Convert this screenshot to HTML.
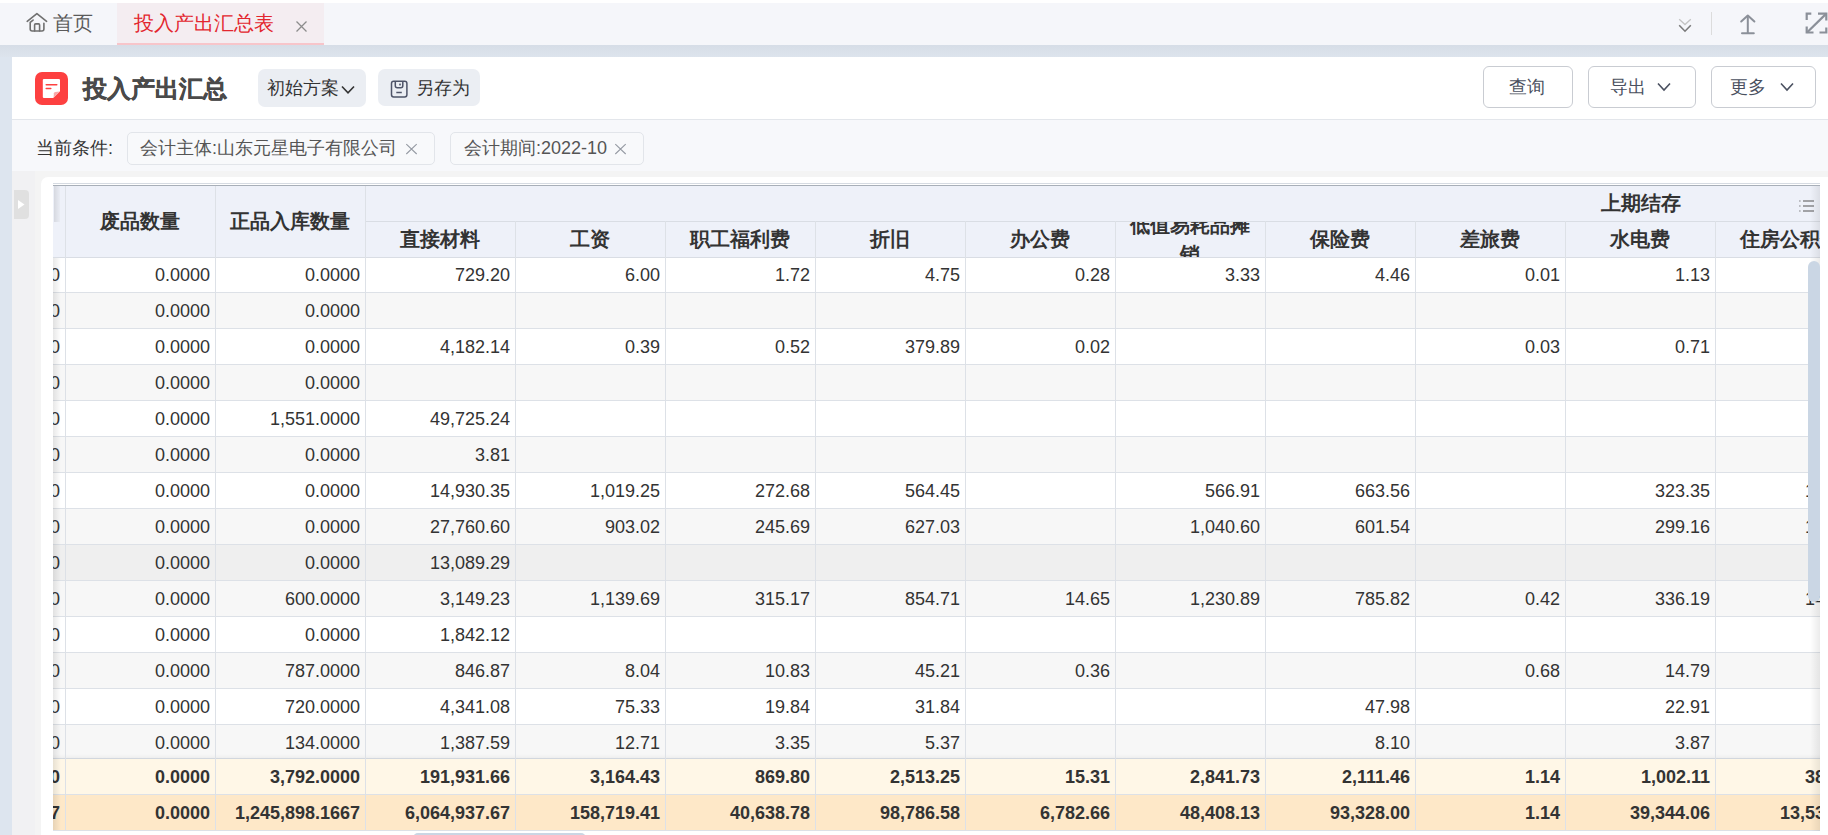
<!DOCTYPE html>
<html><head><meta charset="utf-8"><style>
*{box-sizing:border-box}
html,body{margin:0;padding:0}
body{width:1828px;height:835px;overflow:hidden;position:relative;background:#dde5ef;font-family:"Liberation Sans",sans-serif;color:#333}
.a{position:absolute}
.tabbar{left:0;top:0;width:1828px;height:45px;background:#f5f6fa;border-top:3px solid #fff}
.band{left:0;top:45px;width:1828px;height:12px;background:linear-gradient(180deg,#d6dde7,#dde4ed)}
.hdr{left:12px;top:57px;width:1816px;height:63px;background:#fff;border-bottom:1px solid #e3e6eb}
.cond{left:12px;top:120px;width:1816px;height:51px;background:#f7f8fb}
.gray{left:12px;top:171px;width:1816px;height:664px;background:#f4f4f4}
.gray2{left:12px;top:171px;width:23px;height:664px;background:#f1f1f3}
.card{left:41px;top:177px;width:1787px;height:658px;background:#fff;border-radius:7px 0 0 0}
.t{white-space:nowrap;line-height:1}
.btn{border:1px solid #c9ccd2;border-radius:6px;background:#fff}
.tag{border:1px solid #e2e5ea;border-radius:5px;background:#f8f9fb}
.tbl{left:53px;top:183px;width:1767px;height:648px;overflow:hidden}
.th{background:#eef1f9}
.c{position:absolute;white-space:nowrap;line-height:36px;height:36px;font-size:18px;text-align:right;padding-right:5px;overflow:hidden}
.hc{position:absolute;font-weight:bold;font-size:20px;text-align:center;overflow:hidden;color:#333}
</style></head><body>

<div class="a tabbar"></div>
<div class="a" style="left:117px;top:3px;width:207px;height:42px;background:#f4edf1;border-bottom:2px solid #f7c5ca"></div>
<svg class="a" style="left:22px;top:8px" width="30" height="30" viewBox="0 0 30 30"><g fill="none" stroke="#707070" stroke-width="1.6" stroke-linecap="round" stroke-linejoin="round"><path d="M5.2 13.3 L14.9 5.6 L24.6 13.3"/><path d="M11.1 12.1 L8.2 14.4 L8.2 21 Q8.2 23 10.2 23 L19.9 23 Q21.9 23 21.9 21 L21.9 15.3"/><path d="M12.6 23 L12.6 17 Q12.6 15.9 13.7 15.9 L16.6 15.9 Q17.6 15.9 17.6 17 L17.6 23"/></g></svg>
<div class="a t" style="left:53px;top:13px;font-size:20px;color:#5a5a5a">首页</div>
<div class="a t" style="left:134px;top:13px;font-size:20px;color:#e3262e">投入产出汇总表</div>
<svg class="a" style="left:295px;top:20px" width="13" height="13" viewBox="0 0 13 13"><path d="M1.5 1.5 L11.5 11.5 M11.5 1.5 L1.5 11.5" stroke="#8c8c8c" stroke-width="1.3"/></svg>
<svg class="a" style="left:1676px;top:16px" width="18" height="18" viewBox="0 0 18 18"><path d="M3.2 3.2 L9 8.6 L14.8 3.2" fill="none" stroke="#c4c4c4" stroke-width="1.3"/><path d="M3.2 9.3 L9 15.2 L14.8 9.3" fill="none" stroke="#7a7a7a" stroke-width="1.6"/></svg>
<div class="a" style="left:1711px;top:12px;width:1px;height:23px;background:#dcdcdc"></div>
<svg class="a" style="left:1736px;top:12px" width="24" height="24" viewBox="0 0 24 24"><g fill="none" stroke="#8b9099" stroke-width="2" stroke-linecap="round" stroke-linejoin="round"><path d="M11.8 21 L11.8 4"/><path d="M5.2 9.5 L11.8 3.5 L18.4 9.5"/><path d="M6 21.3 L17.8 21.3"/></g></svg>
<svg class="a" style="left:1802px;top:10px" width="26" height="26" viewBox="0 0 26 26"><g fill="none" stroke="#8b9099" stroke-width="2.2" stroke-linecap="butt"><path d="M4.7 10 L4.7 3.6 L9.3 3.6"/><path d="M16 3.6 L24.3 3.6 L24.3 10.5"/><path d="M24.3 3.6 L5 22.5"/><path d="M4.7 16.5 L4.7 22.5 L11.5 22.5"/><path d="M17.5 22.5 L24.3 22.5 L24.3 17.5"/></g></svg>
<div class="a band"></div>
<div class="a hdr"></div>
<div class="a" style="left:35px;top:72px;width:33px;height:33px;border-radius:7px;background:#fd4040"></div>
<svg class="a" style="left:35px;top:72px" width="33" height="33" viewBox="0 0 33 33"><path d="M9 6.9 Q7.8 6.9 7.8 8.1 L7.8 24.9 Q7.8 26 9 26 L18.2 26 L25 19.3 L25 8.1 Q25 6.9 23.8 6.9 Z" fill="#fff"/><path d="M18.6 25.8 L18.9 21.2 Q19 20 20.2 19.9 L24.8 19.6 Z" fill="#f9a9a9"/><path d="M11.2 12.8 L21.8 12.8 M11.2 16.4 L15.8 16.4" stroke="#fd4040" stroke-width="1.5" stroke-linecap="round"/></svg>
<div class="a t" style="left:83px;top:77px;font-size:24px;font-weight:bold;color:#4a4a4a;-webkit-text-stroke:0.4px #4a4a4a">投入产出汇总</div>
<div class="a" style="left:258px;top:69px;width:108px;height:38px;border-radius:7px;background:#ebeef3"></div>
<div class="a t" style="left:267px;top:79px;font-size:18px;color:#333">初始方案</div>
<svg class="a" style="left:340px;top:84px" width="16" height="12" viewBox="0 0 16 12"><path d="M2 2.5 L8 8.8 L14 2.5" fill="none" stroke="#333" stroke-width="1.6"/></svg>
<div class="a" style="left:378px;top:69px;width:102px;height:37px;border-radius:7px;background:#ebeef3"></div>
<svg class="a" style="left:384px;top:74px" width="30" height="30" viewBox="0 0 30 30"><g fill="none" stroke="#4e5468" stroke-width="1.5"><rect x="7.5" y="7.3" width="15.4" height="15.6" rx="2.2"/><path d="M11.3 7.3 L11.3 11.8 Q11.3 13.8 13.3 13.8 L16.8 13.8 Q18.8 13.8 18.8 11.8 L18.8 7.3"/><path d="M12.3 18.5 L17.8 18.5"/></g><rect x="15.2" y="9.6" width="1.6" height="1.8" fill="#4e5468"/></svg>
<div class="a t" style="left:416px;top:79px;font-size:18px;color:#333">另存为</div>
<div class="a btn" style="left:1483px;top:66px;width:90px;height:42px"></div>
<div class="a t" style="left:1509px;top:78px;font-size:18px;color:#4a5060">查询</div>
<div class="a btn" style="left:1588px;top:66px;width:108px;height:42px"></div>
<div class="a t" style="left:1610px;top:78px;font-size:18px;color:#4a5060">导出</div>
<svg class="a" style="left:1655px;top:80px" width="18" height="14" viewBox="0 0 18 14"><path d="M3 3.5 L9 10 L15 3.5" fill="none" stroke="#4a5060" stroke-width="1.6"/></svg>
<div class="a btn" style="left:1711px;top:66px;width:105px;height:42px"></div>
<div class="a t" style="left:1730px;top:78px;font-size:18px;color:#4a5060">更多</div>
<svg class="a" style="left:1778px;top:80px" width="18" height="14" viewBox="0 0 18 14"><path d="M3 3.5 L9 10 L15 3.5" fill="none" stroke="#4a5060" stroke-width="1.6"/></svg>
<div class="a cond"></div>
<div class="a t" style="left:36px;top:139px;font-size:18px;color:#333">当前条件:</div>
<div class="a tag" style="left:127px;top:132px;width:308px;height:33px"></div>
<div class="a t" style="left:140px;top:139px;font-size:18px;color:#555">会计主体:山东元星电子有限公司</div>
<svg class="a" style="left:405px;top:143px" width="13" height="12" viewBox="0 0 13 12"><path d="M1.3 1.2 L11.7 11 M11.7 1.2 L1.3 11" stroke="#959aa3" stroke-width="1.1"/></svg>
<div class="a tag" style="left:450px;top:132px;width:194px;height:33px"></div>
<div class="a t" style="left:464px;top:139px;font-size:18px;color:#555">会计期间:2022-10</div>
<svg class="a" style="left:614px;top:143px" width="13" height="12" viewBox="0 0 13 12"><path d="M1.3 1.2 L11.7 11 M11.7 1.2 L1.3 11" stroke="#959aa3" stroke-width="1.1"/></svg>
<div class="a gray"></div><div class="a gray2"></div>
<div class="a" style="left:14px;top:190px;width:15px;height:29px;background:#e0e0e0;border-radius:0 4px 4px 0"></div>
<svg class="a" style="left:14px;top:190px" width="15" height="29" viewBox="0 0 15 29"><path d="M4 10 L10.5 14.5 L4 19 Z" fill="#fff"/></svg>
<div class="a card"></div>
<div class="a tbl">
<div class="a" style="left:0;top:0;width:1767px;height:1px;background:#d6dbe2"></div>
<div class="a" style="left:0;top:2px;width:1767px;height:1px;background:#a8afb8"></div>
<div class="a th" style="left:0;top:3px;width:1767px;height:74px"></div>
<div class="a" style="left:312px;top:38px;width:1455px;height:1px;background:#d9dde4"></div>
<div class="a" style="left:0;top:74px;width:1767px;height:1px;background:#d9dde4"></div>
<div class="a" style="left:0;top:75px;width:1767px;height:34px;background:#ffffff"></div>
<div class="a" style="left:0;top:109px;width:1767px;height:1px;background:#dde1e7"></div>
<div class="a" style="left:0;top:110px;width:1767px;height:35px;background:#f7f7f7"></div>
<div class="a" style="left:0;top:145px;width:1767px;height:1px;background:#dde1e7"></div>
<div class="a" style="left:0;top:146px;width:1767px;height:35px;background:#ffffff"></div>
<div class="a" style="left:0;top:181px;width:1767px;height:1px;background:#dde1e7"></div>
<div class="a" style="left:0;top:182px;width:1767px;height:35px;background:#f7f7f7"></div>
<div class="a" style="left:0;top:217px;width:1767px;height:1px;background:#dde1e7"></div>
<div class="a" style="left:0;top:218px;width:1767px;height:35px;background:#ffffff"></div>
<div class="a" style="left:0;top:253px;width:1767px;height:1px;background:#dde1e7"></div>
<div class="a" style="left:0;top:254px;width:1767px;height:35px;background:#f7f7f7"></div>
<div class="a" style="left:0;top:289px;width:1767px;height:1px;background:#dde1e7"></div>
<div class="a" style="left:0;top:290px;width:1767px;height:35px;background:#ffffff"></div>
<div class="a" style="left:0;top:325px;width:1767px;height:1px;background:#dde1e7"></div>
<div class="a" style="left:0;top:326px;width:1767px;height:35px;background:#f7f7f7"></div>
<div class="a" style="left:0;top:361px;width:1767px;height:1px;background:#dde1e7"></div>
<div class="a" style="left:0;top:362px;width:1767px;height:35px;background:#efefef"></div>
<div class="a" style="left:0;top:397px;width:1767px;height:1px;background:#dde1e7"></div>
<div class="a" style="left:0;top:398px;width:1767px;height:35px;background:#f7f7f7"></div>
<div class="a" style="left:0;top:433px;width:1767px;height:1px;background:#dde1e7"></div>
<div class="a" style="left:0;top:434px;width:1767px;height:35px;background:#ffffff"></div>
<div class="a" style="left:0;top:469px;width:1767px;height:1px;background:#dde1e7"></div>
<div class="a" style="left:0;top:470px;width:1767px;height:35px;background:#f7f7f7"></div>
<div class="a" style="left:0;top:505px;width:1767px;height:1px;background:#dde1e7"></div>
<div class="a" style="left:0;top:506px;width:1767px;height:35px;background:#ffffff"></div>
<div class="a" style="left:0;top:541px;width:1767px;height:1px;background:#dde1e7"></div>
<div class="a" style="left:0;top:542px;width:1767px;height:35px;background:#f7f7f7"></div>
<div class="a" style="left:0;top:577px;width:1767px;height:1px;background:#dde1e7"></div>
<div class="a" style="left:0;top:571px;width:1767px;height:4px;background:linear-gradient(180deg,rgba(0,0,0,0),rgba(0,0,0,0.035))"></div>
<div class="a" style="left:0;top:575px;width:1767px;height:1px;background:#d2d7de"></div>
<div class="a" style="left:0;top:576px;width:1767px;height:35px;background:#fff7e7"></div>
<div class="a" style="left:0;top:611px;width:1767px;height:1px;background:#dde1e7"></div>
<div class="a" style="left:0;top:612px;width:1767px;height:35px;background:#fee8c8"></div>
<div class="a" style="left:0;top:647px;width:1767px;height:1px;background:#dde1e7"></div>
<div class="a" style="left:12px;top:3px;width:1px;height:645px;background:#dde1e7"></div>
<div class="a" style="left:162px;top:3px;width:1px;height:645px;background:#dde1e7"></div>
<div class="a" style="left:312px;top:3px;width:1px;height:645px;background:#dde1e7"></div>
<div class="a" style="left:462px;top:38px;width:1px;height:609px;background:#dde1e7"></div>
<div class="a" style="left:612px;top:38px;width:1px;height:609px;background:#dde1e7"></div>
<div class="a" style="left:762px;top:38px;width:1px;height:609px;background:#dde1e7"></div>
<div class="a" style="left:912px;top:38px;width:1px;height:609px;background:#dde1e7"></div>
<div class="a" style="left:1062px;top:38px;width:1px;height:609px;background:#dde1e7"></div>
<div class="a" style="left:1212px;top:38px;width:1px;height:609px;background:#dde1e7"></div>
<div class="a" style="left:1362px;top:38px;width:1px;height:609px;background:#dde1e7"></div>
<div class="a" style="left:1512px;top:38px;width:1px;height:609px;background:#dde1e7"></div>
<div class="a" style="left:1662px;top:38px;width:1px;height:609px;background:#dde1e7"></div>
<div class="hc" style="left:12px;top:3px;width:150px;height:71px;line-height:71px">废品数量</div>
<div class="hc" style="left:162px;top:3px;width:150px;height:71px;line-height:71px">正品入库数量</div>
<div class="hc" style="left:312px;top:39px;width:150px;height:35px;line-height:35px;white-space:nowrap">直接材料</div>
<div class="hc" style="left:462px;top:39px;width:150px;height:35px;line-height:35px;white-space:nowrap">工资</div>
<div class="hc" style="left:612px;top:39px;width:150px;height:35px;line-height:35px;white-space:nowrap">职工福利费</div>
<div class="hc" style="left:762px;top:39px;width:150px;height:35px;line-height:35px;white-space:nowrap">折旧</div>
<div class="hc" style="left:912px;top:39px;width:150px;height:35px;line-height:35px;white-space:nowrap">办公费</div>
<div class="hc" style="left:1062px;top:39px;width:150px;height:35px;"><div style="position:absolute;left:0;top:-11px;width:150px;line-height:29px;white-space:normal;padding:0 14px">低值易耗品摊销</div></div>
<div class="hc" style="left:1212px;top:39px;width:150px;height:35px;line-height:35px;white-space:nowrap">保险费</div>
<div class="hc" style="left:1362px;top:39px;width:150px;height:35px;line-height:35px;white-space:nowrap">差旅费</div>
<div class="hc" style="left:1512px;top:39px;width:150px;height:35px;line-height:35px;white-space:nowrap">水电费</div>
<div class="hc" style="left:1662px;top:39px;width:150px;height:35px;line-height:35px;white-space:nowrap">住房公积金</div>
<div class="hc" style="left:1547px;top:3px;width:82px;height:35px;line-height:35px;white-space:nowrap">上期结存</div>
<svg class="a" style="left:1743px;top:14px" width="20" height="18" viewBox="0 0 20 18"><g stroke="#555" stroke-width="1.1"><path d="M7 4 L18 4 M7 9 L18 9 M7 14 L18 14"/></g><g stroke="#555" stroke-width="0.9"><path d="M3.9 3.4 L3.9 4.6 M3.9 8.4 L3.9 9.6 M3.9 13.4 L3.9 14.6"/></g></svg>
<div class="c" style="left:12px;top:74px;width:150px">0.0000</div>
<div class="c" style="left:162px;top:74px;width:150px">0.0000</div>
<div class="c" style="left:312px;top:74px;width:150px">729.20</div>
<div class="c" style="left:462px;top:74px;width:150px">6.00</div>
<div class="c" style="left:612px;top:74px;width:150px">1.72</div>
<div class="c" style="left:762px;top:74px;width:150px">4.75</div>
<div class="c" style="left:912px;top:74px;width:150px">0.28</div>
<div class="c" style="left:1062px;top:74px;width:150px">3.33</div>
<div class="c" style="left:1212px;top:74px;width:150px">4.46</div>
<div class="c" style="left:1362px;top:74px;width:150px">0.01</div>
<div class="c" style="left:1512px;top:74px;width:150px">1.13</div>
<div class="c" style="left:12px;top:110px;width:150px">0.0000</div>
<div class="c" style="left:162px;top:110px;width:150px">0.0000</div>
<div class="c" style="left:12px;top:146px;width:150px">0.0000</div>
<div class="c" style="left:162px;top:146px;width:150px">0.0000</div>
<div class="c" style="left:312px;top:146px;width:150px">4,182.14</div>
<div class="c" style="left:462px;top:146px;width:150px">0.39</div>
<div class="c" style="left:612px;top:146px;width:150px">0.52</div>
<div class="c" style="left:762px;top:146px;width:150px">379.89</div>
<div class="c" style="left:912px;top:146px;width:150px">0.02</div>
<div class="c" style="left:1362px;top:146px;width:150px">0.03</div>
<div class="c" style="left:1512px;top:146px;width:150px">0.71</div>
<div class="c" style="left:12px;top:182px;width:150px">0.0000</div>
<div class="c" style="left:162px;top:182px;width:150px">0.0000</div>
<div class="c" style="left:12px;top:218px;width:150px">0.0000</div>
<div class="c" style="left:162px;top:218px;width:150px">1,551.0000</div>
<div class="c" style="left:312px;top:218px;width:150px">49,725.24</div>
<div class="c" style="left:12px;top:254px;width:150px">0.0000</div>
<div class="c" style="left:162px;top:254px;width:150px">0.0000</div>
<div class="c" style="left:312px;top:254px;width:150px">3.81</div>
<div class="c" style="left:12px;top:290px;width:150px">0.0000</div>
<div class="c" style="left:162px;top:290px;width:150px">0.0000</div>
<div class="c" style="left:312px;top:290px;width:150px">14,930.35</div>
<div class="c" style="left:462px;top:290px;width:150px">1,019.25</div>
<div class="c" style="left:612px;top:290px;width:150px">272.68</div>
<div class="c" style="left:762px;top:290px;width:150px">564.45</div>
<div class="c" style="left:1062px;top:290px;width:150px">566.91</div>
<div class="c" style="left:1212px;top:290px;width:150px">663.56</div>
<div class="c" style="left:1512px;top:290px;width:150px">323.35</div>
<div class="c" style="left:1662px;top:290px;width:150px">152.36</div>
<div class="c" style="left:12px;top:326px;width:150px">0.0000</div>
<div class="c" style="left:162px;top:326px;width:150px">0.0000</div>
<div class="c" style="left:312px;top:326px;width:150px">27,760.60</div>
<div class="c" style="left:462px;top:326px;width:150px">903.02</div>
<div class="c" style="left:612px;top:326px;width:150px">245.69</div>
<div class="c" style="left:762px;top:326px;width:150px">627.03</div>
<div class="c" style="left:1062px;top:326px;width:150px">1,040.60</div>
<div class="c" style="left:1212px;top:326px;width:150px">601.54</div>
<div class="c" style="left:1512px;top:326px;width:150px">299.16</div>
<div class="c" style="left:1662px;top:326px;width:150px">141.52</div>
<div class="c" style="left:12px;top:362px;width:150px">0.0000</div>
<div class="c" style="left:162px;top:362px;width:150px">0.0000</div>
<div class="c" style="left:312px;top:362px;width:150px">13,089.29</div>
<div class="c" style="left:12px;top:398px;width:150px">0.0000</div>
<div class="c" style="left:162px;top:398px;width:150px">600.0000</div>
<div class="c" style="left:312px;top:398px;width:150px">3,149.23</div>
<div class="c" style="left:462px;top:398px;width:150px">1,139.69</div>
<div class="c" style="left:612px;top:398px;width:150px">315.17</div>
<div class="c" style="left:762px;top:398px;width:150px">854.71</div>
<div class="c" style="left:912px;top:398px;width:150px">14.65</div>
<div class="c" style="left:1062px;top:398px;width:150px">1,230.89</div>
<div class="c" style="left:1212px;top:398px;width:150px">785.82</div>
<div class="c" style="left:1362px;top:398px;width:150px">0.42</div>
<div class="c" style="left:1512px;top:398px;width:150px">336.19</div>
<div class="c" style="left:1662px;top:398px;width:150px">145.21</div>
<div class="c" style="left:12px;top:434px;width:150px">0.0000</div>
<div class="c" style="left:162px;top:434px;width:150px">0.0000</div>
<div class="c" style="left:312px;top:434px;width:150px">1,842.12</div>
<div class="c" style="left:12px;top:470px;width:150px">0.0000</div>
<div class="c" style="left:162px;top:470px;width:150px">787.0000</div>
<div class="c" style="left:312px;top:470px;width:150px">846.87</div>
<div class="c" style="left:462px;top:470px;width:150px">8.04</div>
<div class="c" style="left:612px;top:470px;width:150px">10.83</div>
<div class="c" style="left:762px;top:470px;width:150px">45.21</div>
<div class="c" style="left:912px;top:470px;width:150px">0.36</div>
<div class="c" style="left:1362px;top:470px;width:150px">0.68</div>
<div class="c" style="left:1512px;top:470px;width:150px">14.79</div>
<div class="c" style="left:12px;top:506px;width:150px">0.0000</div>
<div class="c" style="left:162px;top:506px;width:150px">720.0000</div>
<div class="c" style="left:312px;top:506px;width:150px">4,341.08</div>
<div class="c" style="left:462px;top:506px;width:150px">75.33</div>
<div class="c" style="left:612px;top:506px;width:150px">19.84</div>
<div class="c" style="left:762px;top:506px;width:150px">31.84</div>
<div class="c" style="left:1212px;top:506px;width:150px">47.98</div>
<div class="c" style="left:1512px;top:506px;width:150px">22.91</div>
<div class="c" style="left:12px;top:542px;width:150px">0.0000</div>
<div class="c" style="left:162px;top:542px;width:150px">134.0000</div>
<div class="c" style="left:312px;top:542px;width:150px">1,387.59</div>
<div class="c" style="left:462px;top:542px;width:150px">12.71</div>
<div class="c" style="left:612px;top:542px;width:150px">3.35</div>
<div class="c" style="left:762px;top:542px;width:150px">5.37</div>
<div class="c" style="left:1212px;top:542px;width:150px">8.10</div>
<div class="c" style="left:1512px;top:542px;width:150px">3.87</div>
<div class="c" style="left:12px;top:576px;width:150px;font-weight:bold">0.0000</div>
<div class="c" style="left:162px;top:576px;width:150px;font-weight:bold">3,792.0000</div>
<div class="c" style="left:312px;top:576px;width:150px;font-weight:bold">191,931.66</div>
<div class="c" style="left:462px;top:576px;width:150px;font-weight:bold">3,164.43</div>
<div class="c" style="left:612px;top:576px;width:150px;font-weight:bold">869.80</div>
<div class="c" style="left:762px;top:576px;width:150px;font-weight:bold">2,513.25</div>
<div class="c" style="left:912px;top:576px;width:150px;font-weight:bold">15.31</div>
<div class="c" style="left:1062px;top:576px;width:150px;font-weight:bold">2,841.73</div>
<div class="c" style="left:1212px;top:576px;width:150px;font-weight:bold">2,111.46</div>
<div class="c" style="left:1362px;top:576px;width:150px;font-weight:bold">1.14</div>
<div class="c" style="left:1512px;top:576px;width:150px;font-weight:bold">1,002.11</div>
<div class="c" style="left:1662px;top:576px;width:150px;font-weight:bold">385.26</div>
<div class="c" style="left:12px;top:612px;width:150px;font-weight:bold">0.0000</div>
<div class="c" style="left:162px;top:612px;width:150px;font-weight:bold">1,245,898.1667</div>
<div class="c" style="left:312px;top:612px;width:150px;font-weight:bold">6,064,937.67</div>
<div class="c" style="left:462px;top:612px;width:150px;font-weight:bold">158,719.41</div>
<div class="c" style="left:612px;top:612px;width:150px;font-weight:bold">40,638.78</div>
<div class="c" style="left:762px;top:612px;width:150px;font-weight:bold">98,786.58</div>
<div class="c" style="left:912px;top:612px;width:150px;font-weight:bold">6,782.66</div>
<div class="c" style="left:1062px;top:612px;width:150px;font-weight:bold">48,408.13</div>
<div class="c" style="left:1212px;top:612px;width:150px;font-weight:bold">93,328.00</div>
<div class="c" style="left:1362px;top:612px;width:150px;font-weight:bold">1.14</div>
<div class="c" style="left:1512px;top:612px;width:150px;font-weight:bold">39,344.06</div>
<div class="c" style="left:1662px;top:612px;width:150px;font-weight:bold">13,535.26</div>
<div class="c" style="left:-106px;top:74px;width:118px">0</div>
<div class="c" style="left:-106px;top:110px;width:118px">0</div>
<div class="c" style="left:-106px;top:146px;width:118px">0</div>
<div class="c" style="left:-106px;top:182px;width:118px">0</div>
<div class="c" style="left:-106px;top:218px;width:118px">0</div>
<div class="c" style="left:-106px;top:254px;width:118px">0</div>
<div class="c" style="left:-106px;top:290px;width:118px">0</div>
<div class="c" style="left:-106px;top:326px;width:118px">0</div>
<div class="c" style="left:-106px;top:362px;width:118px">0</div>
<div class="c" style="left:-106px;top:398px;width:118px">0</div>
<div class="c" style="left:-106px;top:434px;width:118px">0</div>
<div class="c" style="left:-106px;top:470px;width:118px">0</div>
<div class="c" style="left:-106px;top:506px;width:118px">0</div>
<div class="c" style="left:-106px;top:542px;width:118px">0</div>
<div class="c" style="left:-106px;top:576px;width:118px;font-weight:bold">0</div>
<div class="c" style="left:-106px;top:612px;width:118px;font-weight:bold">7</div>
<div class="a" style="left:1px;top:3px;width:6px;height:36px;background:linear-gradient(90deg,rgba(0,0,0,0.10),rgba(0,0,0,0.02))"></div>
<div class="a" style="left:0;top:75px;width:8px;height:572px;background:linear-gradient(90deg,rgba(0,0,0,0.09),rgba(0,0,0,0))"></div>
<div class="a" style="left:1757px;top:3px;width:10px;height:645px;background:linear-gradient(90deg,rgba(0,0,0,0),rgba(0,0,0,0.08))"></div>
<div class="a" style="left:1755px;top:78px;width:12px;height:341px;border-radius:6px;background:#cad6e4"></div>
</div>
<div class="a" style="left:413px;top:833px;width:173px;height:10px;border-radius:5px;background:#cad6e4"></div>
</body></html>
